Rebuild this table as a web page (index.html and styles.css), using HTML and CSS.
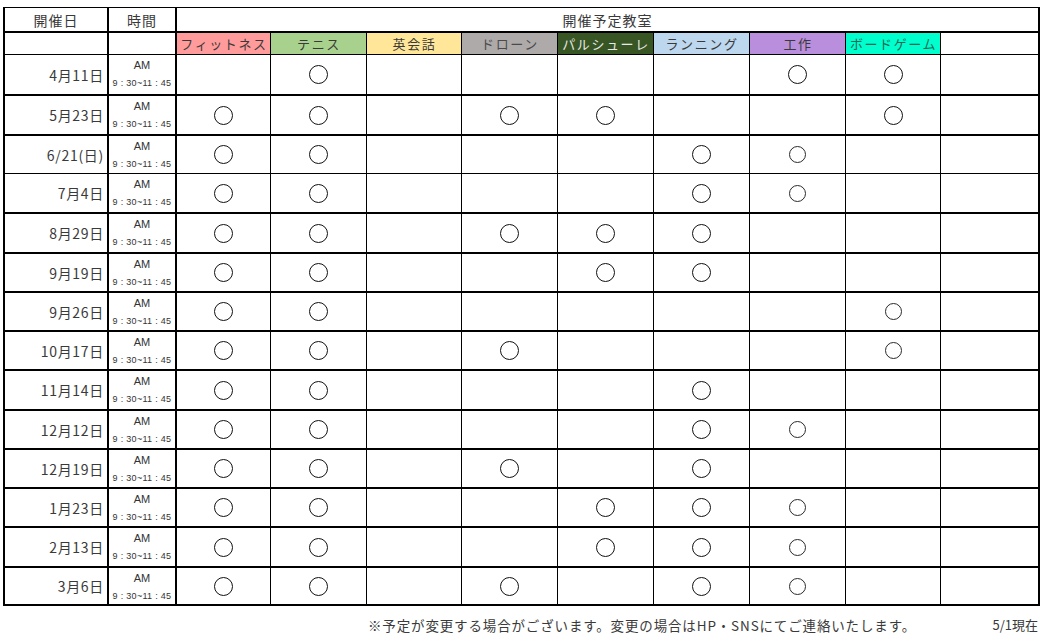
FILE: index.html
```html
<!DOCTYPE html>
<html lang="ja">
<head>
<meta charset="utf-8">
<title>開催予定教室</title>
<link rel="stylesheet" href="styles.css">
</head>
<body>
<div class="sheet">
  <div class="c c1 h1 head">開催日</div>
  <div class="c c2 h1 head">時間</div>
  <div class="c c3 h1 head span">開催予定教室</div>

  <div class="c c1 h2"></div>
  <div class="c c2 h2"></div>
  <div class="c c3 h2 cls fit">フィットネス</div>
  <div class="c h2 cls ten">テニス</div>
  <div class="c h2 cls eng">英会話</div>
  <div class="c h2 cls dro">ドローン</div>
  <div class="c h2 cls par">パルシューレ</div>
  <div class="c h2 cls run">ランニング</div>
  <div class="c h2 cls kou">工作</div>
  <div class="c h2 cls bor">ボードゲーム</div>
  <div class="c h2"></div>

  <!-- 1 -->
  <div class="c c1 r1 date">4月11日</div>
  <div class="c c2 r1 time"><span class="am">AM</span><span class="hr">9 : 30~11 : 45</span></div>
  <div class="c c3 r1"></div>
  <div class="c r1"><span class="o"></span></div>
  <div class="c r1"></div>
  <div class="c r1"></div>
  <div class="c r1"></div>
  <div class="c r1"></div>
  <div class="c r1"><span class="o"></span></div>
  <div class="c r1"><span class="o"></span></div>
  <div class="c r1"></div>

  <!-- 2 -->
  <div class="c c1 date">5月23日</div>
  <div class="c c2 time"><span class="am">AM</span><span class="hr">9 : 30~11 : 45</span></div>
  <div class="c c3"><span class="o"></span></div>
  <div class="c"><span class="o"></span></div>
  <div class="c"></div>
  <div class="c"><span class="o"></span></div>
  <div class="c"><span class="o"></span></div>
  <div class="c"></div>
  <div class="c"></div>
  <div class="c"><span class="o"></span></div>
  <div class="c"></div>

  <!-- 3 -->
  <div class="c c1 date">6/21(日)</div>
  <div class="c c2 time"><span class="am">AM</span><span class="hr">9 : 30~11 : 45</span></div>
  <div class="c c3"><span class="o"></span></div>
  <div class="c"><span class="o"></span></div>
  <div class="c"></div>
  <div class="c"></div>
  <div class="c"></div>
  <div class="c"><span class="o"></span></div>
  <div class="c"><span class="o sm"></span></div>
  <div class="c"></div>
  <div class="c"></div>

  <!-- 4 -->
  <div class="c c1 thin date">7月4日</div>
  <div class="c c2 thin time"><span class="am">AM</span><span class="hr">9 : 30~11 : 45</span></div>
  <div class="c c3 thin"><span class="o"></span></div>
  <div class="c thin"><span class="o"></span></div>
  <div class="c thin"></div>
  <div class="c thin"></div>
  <div class="c thin"></div>
  <div class="c thin"><span class="o"></span></div>
  <div class="c thin"><span class="o sm"></span></div>
  <div class="c thin"></div>
  <div class="c thin"></div>

  <!-- 5 -->
  <div class="c c1 date">8月29日</div>
  <div class="c c2 time"><span class="am">AM</span><span class="hr">9 : 30~11 : 45</span></div>
  <div class="c c3"><span class="o"></span></div>
  <div class="c"><span class="o"></span></div>
  <div class="c"></div>
  <div class="c"><span class="o"></span></div>
  <div class="c"><span class="o"></span></div>
  <div class="c"><span class="o"></span></div>
  <div class="c"></div>
  <div class="c"></div>
  <div class="c"></div>

  <!-- 6 -->
  <div class="c c1 date">9月19日</div>
  <div class="c c2 time"><span class="am">AM</span><span class="hr">9 : 30~11 : 45</span></div>
  <div class="c c3"><span class="o"></span></div>
  <div class="c"><span class="o"></span></div>
  <div class="c"></div>
  <div class="c"></div>
  <div class="c"><span class="o"></span></div>
  <div class="c"><span class="o"></span></div>
  <div class="c"></div>
  <div class="c"></div>
  <div class="c"></div>

  <!-- 7 -->
  <div class="c c1 date">9月26日</div>
  <div class="c c2 time"><span class="am">AM</span><span class="hr">9 : 30~11 : 45</span></div>
  <div class="c c3"><span class="o"></span></div>
  <div class="c"><span class="o"></span></div>
  <div class="c"></div>
  <div class="c"></div>
  <div class="c"></div>
  <div class="c"></div>
  <div class="c"></div>
  <div class="c"><span class="o sm"></span></div>
  <div class="c"></div>

  <!-- 8 -->
  <div class="c c1 date">10月17日</div>
  <div class="c c2 time"><span class="am">AM</span><span class="hr">9 : 30~11 : 45</span></div>
  <div class="c c3"><span class="o"></span></div>
  <div class="c"><span class="o"></span></div>
  <div class="c"></div>
  <div class="c"><span class="o"></span></div>
  <div class="c"></div>
  <div class="c"></div>
  <div class="c"></div>
  <div class="c"><span class="o sm"></span></div>
  <div class="c"></div>

  <!-- 9 -->
  <div class="c c1 date">11月14日</div>
  <div class="c c2 time"><span class="am">AM</span><span class="hr">9 : 30~11 : 45</span></div>
  <div class="c c3"><span class="o"></span></div>
  <div class="c"><span class="o"></span></div>
  <div class="c"></div>
  <div class="c"></div>
  <div class="c"></div>
  <div class="c"><span class="o"></span></div>
  <div class="c"></div>
  <div class="c"></div>
  <div class="c"></div>

  <!-- 10 -->
  <div class="c c1 date">12月12日</div>
  <div class="c c2 time"><span class="am">AM</span><span class="hr">9 : 30~11 : 45</span></div>
  <div class="c c3"><span class="o"></span></div>
  <div class="c"><span class="o"></span></div>
  <div class="c"></div>
  <div class="c"></div>
  <div class="c"></div>
  <div class="c"><span class="o"></span></div>
  <div class="c"><span class="o sm"></span></div>
  <div class="c"></div>
  <div class="c"></div>

  <!-- 11 -->
  <div class="c c1 date">12月19日</div>
  <div class="c c2 time"><span class="am">AM</span><span class="hr">9 : 30~11 : 45</span></div>
  <div class="c c3"><span class="o"></span></div>
  <div class="c"><span class="o"></span></div>
  <div class="c"></div>
  <div class="c"><span class="o"></span></div>
  <div class="c"></div>
  <div class="c"><span class="o"></span></div>
  <div class="c"></div>
  <div class="c"></div>
  <div class="c"></div>

  <!-- 12 -->
  <div class="c c1 date">1月23日</div>
  <div class="c c2 time"><span class="am">AM</span><span class="hr">9 : 30~11 : 45</span></div>
  <div class="c c3"><span class="o"></span></div>
  <div class="c"><span class="o"></span></div>
  <div class="c"></div>
  <div class="c"></div>
  <div class="c"><span class="o"></span></div>
  <div class="c"><span class="o"></span></div>
  <div class="c"><span class="o sm"></span></div>
  <div class="c"></div>
  <div class="c"></div>

  <!-- 13 -->
  <div class="c c1 date">2月13日</div>
  <div class="c c2 time"><span class="am">AM</span><span class="hr">9 : 30~11 : 45</span></div>
  <div class="c c3"><span class="o"></span></div>
  <div class="c"><span class="o"></span></div>
  <div class="c"></div>
  <div class="c"></div>
  <div class="c"><span class="o"></span></div>
  <div class="c"><span class="o"></span></div>
  <div class="c"><span class="o sm"></span></div>
  <div class="c"></div>
  <div class="c"></div>

  <!-- 14 -->
  <div class="c c1 date">3月6日</div>
  <div class="c c2 time"><span class="am">AM</span><span class="hr">9 : 30~11 : 45</span></div>
  <div class="c c3"><span class="o"></span></div>
  <div class="c"><span class="o"></span></div>
  <div class="c"></div>
  <div class="c"><span class="o"></span></div>
  <div class="c"></div>
  <div class="c"><span class="o"></span></div>
  <div class="c"><span class="o sm"></span></div>
  <div class="c"></div>
  <div class="c"></div>
</div>
<div class="foot">
  <span class="note">※予定が変更する場合がございます。変更の場合はHP・SNSにてご連絡いたします。</span>
  <span class="asof">5/1現在</span>
</div>
</body>
</html>
```
FILE: styles.css
```css
html, body {
  background: #fff;
}
body {
  margin: 0;
  padding: 7px 0 0 3px;
  font-family: "Noto Sans CJK JP", "Noto Sans", sans-serif;
  color: #222;
}
.sheet {
  display: grid;
  grid-template-columns: 104px 68px 95px 96px 95px 96px 96px 96px 96px 95px 98px;
  grid-template-rows: 23px 23px 40px 40px 39px 39px 40px 39px 39px 39px 40px 39px 39px 39px 40px 38px;
  width: max-content;
  border-top: 1px solid #000;
  border-right: 2px solid #000;
  border-bottom: 2px solid #000;
}
.c {
  box-sizing: border-box;
  border-left: 1px solid #000;
  border-top: 2px solid #000;
  display: flex;
  align-items: center;
  justify-content: center;
  overflow: hidden;
  white-space: nowrap;
}
.c1, .c2, .c3 {
  border-left-width: 2px;
}
.h1 {
  border-top: 0;
}
.r1, .thin {
  border-top-width: 1px;
}
.span {
  grid-column: span 9;
}
.head {
  font-size: 14px;
  line-height: 1;
  letter-spacing: 1px;
  padding-top: 1px;
  color: #3a3a3a;
}
.cls {
  font-size: 13px;
  line-height: 1;
  letter-spacing: 1.6px;
  color: #3a3a3a;
  padding-left: 1px;
}
.fit { background: #ff9b9b; }
.ten { background: #a9d18e; }
.eng { background: #ffe699; }
.dro { background: #aeaaaa; color: #4a4a4a; }
.par { background: #375623; color: #e8e8e8; }
.run { background: #bdd7ee; }
.kou { background: #b98edc; }
.bor { background: #00ffcc; color: #226655; }
.date {
  justify-content: flex-end;
  padding-right: 3px;
  font-size: 14px;
  line-height: 1;
  letter-spacing: 0.7px;
  color: #3a3a3a;
}
.time {
  flex-direction: column;
  justify-content: flex-start;
  padding-top: 5px;
  line-height: 1;
  color: #333;
  font-family: "Liberation Sans", Arial, sans-serif;
}
.am {
  font-size: 11px;
}
.hr {
  font-size: 9px;
  margin-top: 8px;
  letter-spacing: 0.3px;
}
.o {
  display: block;
  box-sizing: border-box;
  width: 19px;
  height: 19px;
  border: 1.2px solid #111;
  border-radius: 50%;
}
.o.sm {
  width: 17px;
  height: 17px;
  border-width: 1px;
  border-color: #2a2a2a;
}
.foot {
  display: flex;
  width: 1035px;
  margin-top: 11px;
  font-size: 13.5px;
  line-height: 16px;
  color: #3a3a3a;
}
.note {
  margin-left: 365px;
  letter-spacing: 0.85px;
}
.asof {
  margin-left: auto;
  font-size: 13px;
}
```
